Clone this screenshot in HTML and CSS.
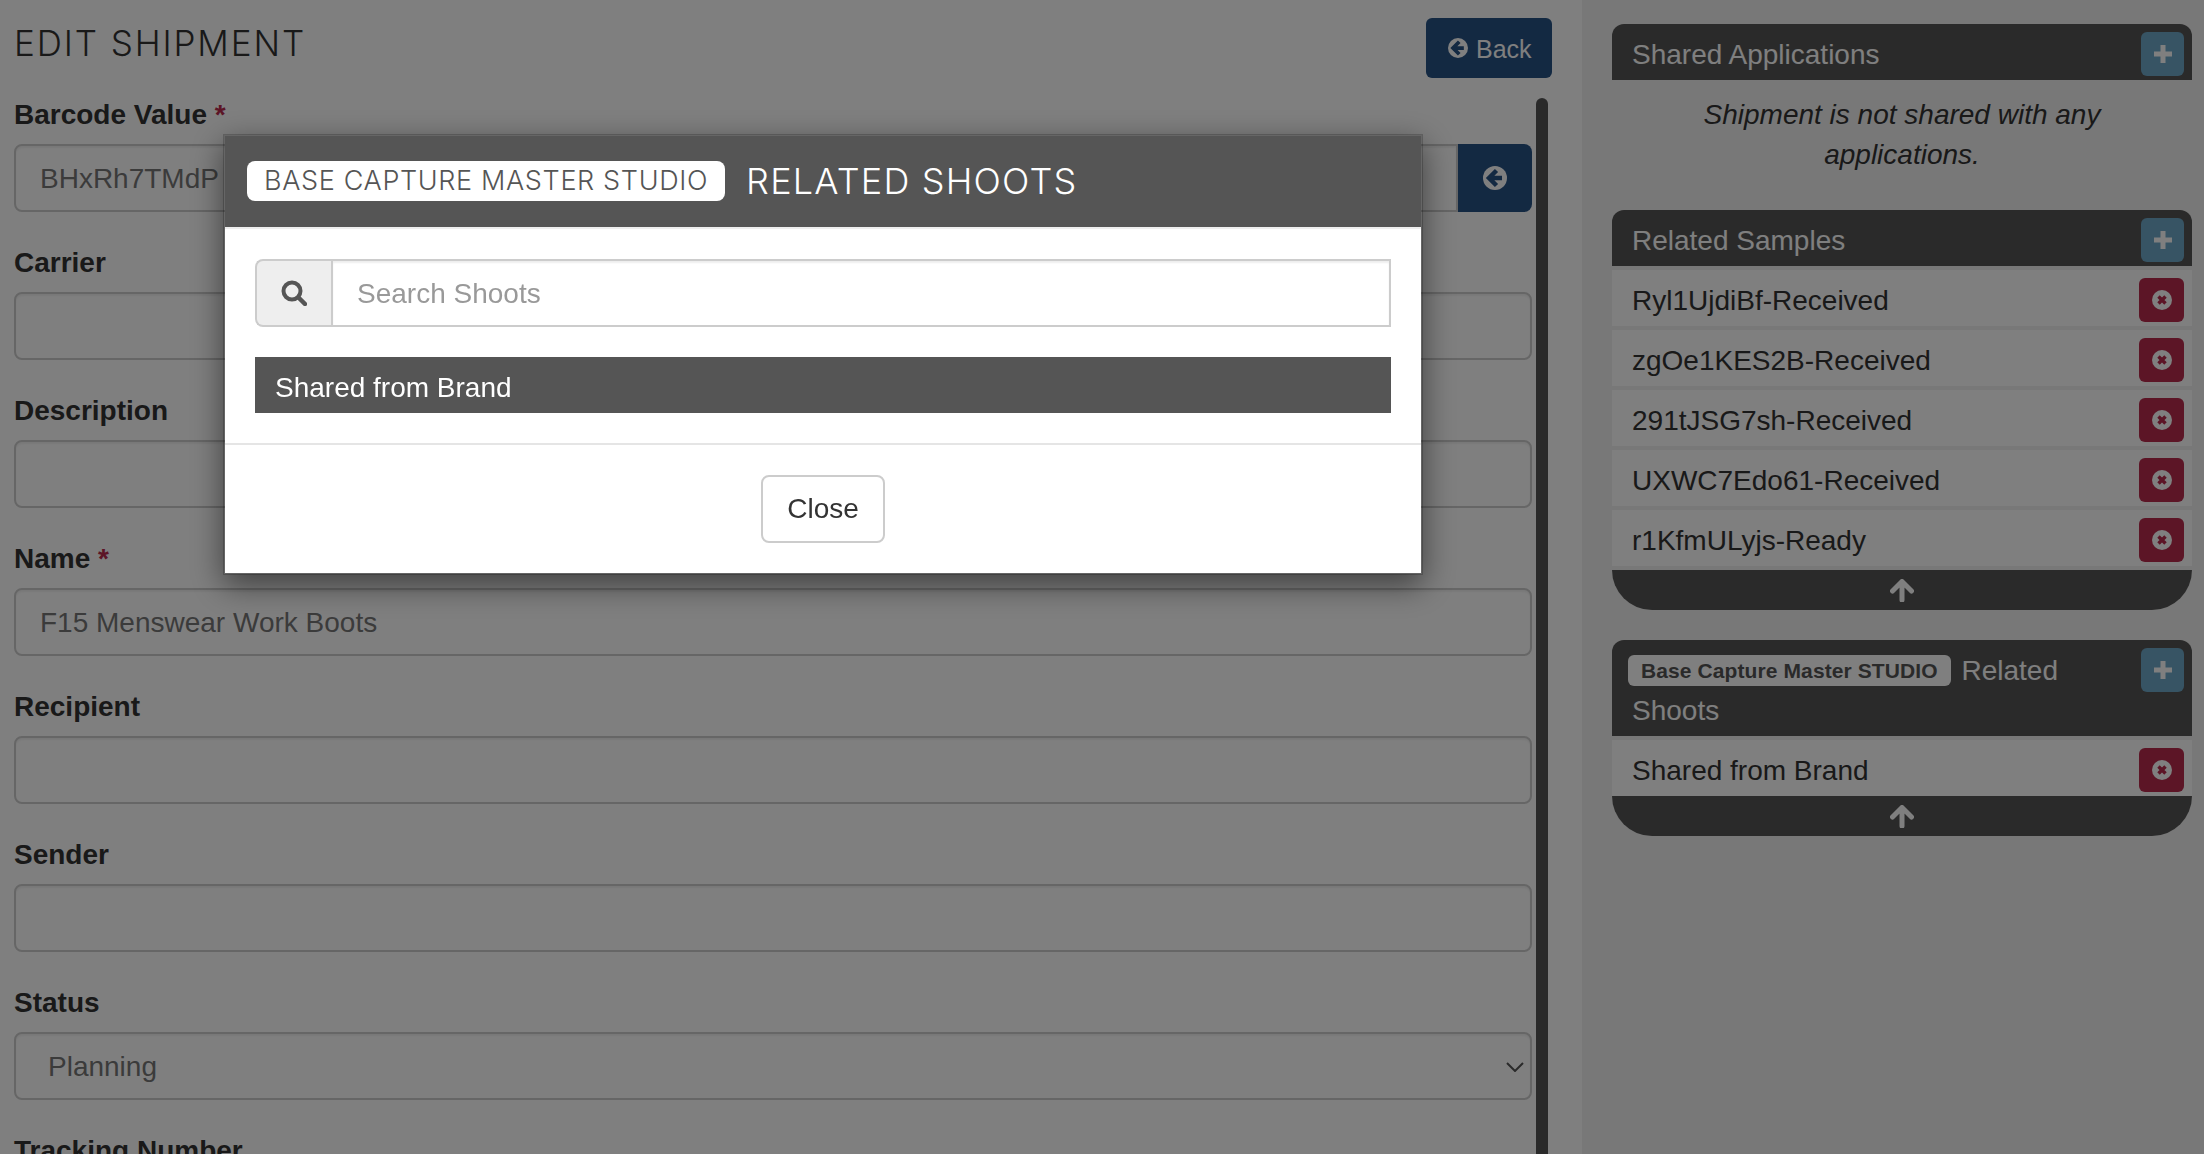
FILE: index.html
```html
<!DOCTYPE html>
<html lang="en">
<head>
<meta charset="utf-8">
<title>Edit Shipment</title>
<link rel="stylesheet" href="styles.css">
</head>
<body>
<div class="page">
  <main class="main">
    <header class="main-head">
      <h1 class="page-title">EDIT SHIPMENT</h1>
      <button class="btn-back" type="button">
        <svg class="icon-back" viewBox="0 0 24 24"><circle cx="12" cy="12" r="12" fill="currentColor"/><path d="M13.500 4.500 6 12l7.500 7.500M7 12H19" fill="none" stroke="#265285" stroke-width="4.500"/></svg>
        <span class="btn-back-text">Back</span>
      </button>
    </header>
    <div class="main-body">
      <form class="form">
        <div class="field">
          <label class="label">Barcode Value <span class="req">*</span></label>
          <div class="input-group">
            <input class="input input--joined" type="text" value="BHxRh7TMdP">
            <span class="addon-btn"><svg class="icon-addon" viewBox="0 0 24 24"><circle cx="12" cy="12" r="12" fill="currentColor"/><path d="M13.500 4.500 6 12l7.500 7.500M7 12H19" fill="none" stroke="#265285" stroke-width="4.500"/></svg></span>
          </div>
        </div>
        <div class="field"><label class="label">Carrier</label><input class="input" type="text"></div>
        <div class="field"><label class="label">Description</label><input class="input" type="text"></div>
        <div class="field"><label class="label">Name <span class="req">*</span></label><input class="input" type="text" value="F15 Menswear Work Boots"></div>
        <div class="field"><label class="label">Recipient</label><input class="input" type="text"></div>
        <div class="field"><label class="label">Sender</label><input class="input" type="text"></div>
        <div class="field">
          <label class="label">Status</label>
          <div class="select-wrap">
            <select class="input select"><option>Planning</option></select>
            <svg class="icon-caret" viewBox="0 0 18 10"><path d="M1 1l8 8 8-8" fill="none" stroke="#555" stroke-width="2"/></svg>
          </div>
        </div>
        <div class="field"><label class="label">Tracking Number</label><input class="input" type="text"></div>
      </form>
      <div class="scrollbar"></div>
    </div>
  </main>

  <aside class="side">
    <section class="panel">
      <div class="panel-head">
        <div class="panel-title">Shared Applications</div>
        <button class="btn-add" type="button"><svg class="icon-plus" viewBox="0 0 18 18"><path d="M9 0v18M0 9h18" stroke="currentColor" stroke-width="5"/></svg></button>
      </div>
      <p class="panel-empty">Shipment is not shared with any applications.</p>
    </section>

    <section class="panel">
      <div class="panel-head">
        <div class="panel-title">Related Samples</div>
        <button class="btn-add" type="button"><svg class="icon-plus" viewBox="0 0 18 18"><path d="M9 0v18M0 9h18" stroke="currentColor" stroke-width="5"/></svg></button>
      </div>
      <div class="row"><span class="row-text">Ryl1UjdiBf-Received</span><button class="btn-del" type="button"><svg class="icon-x" viewBox="0 0 20 20"><circle cx="10" cy="10" r="10" fill="currentColor"/><path d="M6.500 6.500l7 7M13.500 6.500l-7 7" stroke="#b82a4c" stroke-width="3.500"/></svg></button></div>
      <div class="row"><span class="row-text">zgOe1KES2B-Received</span><button class="btn-del" type="button"><svg class="icon-x" viewBox="0 0 20 20"><circle cx="10" cy="10" r="10" fill="currentColor"/><path d="M6.500 6.500l7 7M13.500 6.500l-7 7" stroke="#b82a4c" stroke-width="3.500"/></svg></button></div>
      <div class="row"><span class="row-text">291tJSG7sh-Received</span><button class="btn-del" type="button"><svg class="icon-x" viewBox="0 0 20 20"><circle cx="10" cy="10" r="10" fill="currentColor"/><path d="M6.500 6.500l7 7M13.500 6.500l-7 7" stroke="#b82a4c" stroke-width="3.500"/></svg></button></div>
      <div class="row"><span class="row-text">UXWC7Edo61-Received</span><button class="btn-del" type="button"><svg class="icon-x" viewBox="0 0 20 20"><circle cx="10" cy="10" r="10" fill="currentColor"/><path d="M6.500 6.500l7 7M13.500 6.500l-7 7" stroke="#b82a4c" stroke-width="3.500"/></svg></button></div>
      <div class="row"><span class="row-text">r1KfmULyjs-Ready</span><button class="btn-del" type="button"><svg class="icon-x" viewBox="0 0 20 20"><circle cx="10" cy="10" r="10" fill="currentColor"/><path d="M6.500 6.500l7 7M13.500 6.500l-7 7" stroke="#b82a4c" stroke-width="3.500"/></svg></button></div>
      <div class="panel-foot panel-foot--gap"><svg class="icon-up" viewBox="0 0 24 23"><path d="M2.500 12 12 2.500 21.500 12M12 4v17" fill="none" stroke="currentColor" stroke-width="5" stroke-linecap="round" stroke-linejoin="round"/></svg></div>
    </section>

    <section class="panel">
      <div class="panel-head">
        <div class="panel-title"><span class="tag">Base Capture Master STUDIO</span> Related Shoots</div>
        <button class="btn-add" type="button"><svg class="icon-plus" viewBox="0 0 18 18"><path d="M9 0v18M0 9h18" stroke="currentColor" stroke-width="5"/></svg></button>
      </div>
      <div class="row"><span class="row-text">Shared from Brand</span><button class="btn-del" type="button"><svg class="icon-x" viewBox="0 0 20 20"><circle cx="10" cy="10" r="10" fill="currentColor"/><path d="M6.500 6.500l7 7M13.500 6.500l-7 7" stroke="#b82a4c" stroke-width="3.500"/></svg></button></div>
      <div class="panel-foot"><svg class="icon-up" viewBox="0 0 24 23"><path d="M2.500 12 12 2.500 21.500 12M12 4v17" fill="none" stroke="currentColor" stroke-width="5" stroke-linecap="round" stroke-linejoin="round"/></svg></div>
    </section>
  </aside>
</div>

<div class="backdrop"></div>

<div class="modal" role="dialog">
  <div class="modal-head">
    <span class="modal-tag">BASE CAPTURE MASTER STUDIO</span>
    <h2 class="modal-title">RELATED SHOOTS</h2>
  </div>
  <div class="modal-body">
    <div class="search">
      <span class="search-addon"><svg class="icon-search" viewBox="0 0 26 26"><circle cx="11" cy="11" r="8.500" fill="none" stroke="currentColor" stroke-width="4"/><path d="M17.500 17.500 24 24" stroke="currentColor" stroke-width="4.500" stroke-linecap="round"/></svg></span>
      <input class="search-input" type="text" placeholder="Search Shoots">
    </div>
    <div class="result">Shared from Brand</div>
  </div>
  <div class="modal-foot">
    <button class="btn-close" type="button">Close</button>
  </div>
</div>
</body>
</html>
```

FILE: styles.css
```css
* { box-sizing: border-box; }

html, body {
  margin: 0;
  height: 100%;
  overflow: hidden;
}

body {
  font-family: "Liberation Sans", Arial, sans-serif;
  font-size: 28px;
  line-height: 40px;
  color: #333;
  background: #fff;
}

.page {
  display: grid;
  grid-template-columns: 1582px 622px;
  height: 1154px;
  overflow: hidden;
}

/* Main column */
.main {
  padding-left: 14px;
  overflow: hidden;
}

.main-head {
  display: flex;
  justify-content: space-between;
  align-items: flex-start;
  height: 94px;
  padding: 18px 30px 0 0;
}

.page-title {
  margin: 0;
  font-family: Inter, "Liberation Sans", sans-serif;
  font-size: 35px;
  font-weight: 350;
  letter-spacing: 1.88px;
  line-height: 50px;
  color: #333;
}

.btn-back {
  display: flex;
  align-items: center;
  gap: 8px;
  width: 126px;
  height: 60px;
  padding: 0 0 0 22px;
  border: 0;
  border-radius: 6px;
  background: #265285;
  color: #fff;
  font: 25px/40px "Liberation Sans", Arial, sans-serif;
}

.btn-back-text { padding-top: 2px; }

.icon-back { width: 20px; height: 20px; }

.main-body {
  display: flex;
  align-items: flex-start;
  gap: 4px;
}

.form { width: 1518px; flex: none; }

.field { margin-bottom: 30px; }

.label {
  display: block;
  height: 40px;
  margin-bottom: 10px;
  padding-top: 1px;
  font-weight: 700;
}

.req { color: #b82a4c; }

.input {
  display: block;
  width: 100%;
  height: 68px;
  padding: 2px 24px 0;
  border: 2px solid #ccc;
  border-radius: 8px;
  background: #fff;
  color: #777;
  font: 28px/40px "Liberation Sans", Arial, sans-serif;
  box-shadow: inset 0 2px 2px rgba(0, 0, 0, .06);
}

.input-group { display: flex; }

.input--joined {
  flex: 1;
  border-radius: 8px 0 0 8px;
}

.addon-btn {
  display: flex;
  align-items: center;
  justify-content: center;
  flex: none;
  width: 74px;
  height: 68px;
  border-radius: 0 8px 8px 0;
  background: #265285;
  color: #fff;
}

.icon-addon { width: 24px; height: 24px; }

.select-wrap { position: relative; }

.select {
  appearance: none;
  padding-left: 32px;
}

.icon-caret {
  position: absolute;
  right: 8px;
  top: 30px;
  width: 18px;
  height: 10px;
}

.scrollbar {
  flex: none;
  width: 12px;
  height: 1060px;
  margin-top: 4px;
  border-radius: 6px 6px 0 0;
  background: #555;
}

/* Side column */
.side {
  padding: 24px 12px 0 30px;
  background: #f0f0f0;
}

.panel { margin-bottom: 30px; }

.panel-head {
  display: flex;
  align-items: flex-start;
  justify-content: space-between;
  padding: 8px 8px 0 20px;
  border-radius: 12px 12px 0 0;
  background: #555;
  color: #fff;
}

.panel-title {
  flex: 1;
  padding: 3px 0 5px;
}

.tag {
  display: inline-block;
  height: 31px;
  margin: 0 3px 0 -4px;
  padding: 0 13px;
  border-radius: 6px;
  background: #fff;
  color: #555;
  font-size: 21px;
  font-weight: 700;
  letter-spacing: .1px;
  line-height: 31px;
  vertical-align: 2px;
}

.btn-add {
  display: flex;
  align-items: center;
  justify-content: center;
  flex: none;
  width: 43px;
  height: 44px;
  padding: 0;
  border: 0;
  border-radius: 6px;
  background: #6ea8c8;
  color: #fff;
}

.icon-plus { width: 18px; height: 18px; }

.panel-empty {
  margin: 0;
  padding: 15px 60px 5px;
  font-style: italic;
  text-align: center;
}

.row {
  display: flex;
  align-items: center;
  justify-content: space-between;
  height: 56px;
  margin-top: 4px;
  padding: 0 8px 0 20px;
  background: #fefefe;
}

.row-text { padding-top: 5px; }

.btn-del {
  display: flex;
  align-items: center;
  justify-content: center;
  flex: none;
  width: 45px;
  height: 44px;
  margin-top: 4px;
  padding: 0;
  border: 0;
  border-radius: 6px;
  background: #b82a4c;
  color: #fff;
}

.icon-x { width: 20px; height: 20px; }

.panel-foot {
  display: flex;
  align-items: center;
  justify-content: center;
  height: 40px;
  border-radius: 0 0 40px 40px;
  background: #555;
  color: #fff;
}

.panel-foot--gap { margin-top: 4px; }

.icon-up { width: 24px; height: 23px; }

/* Backdrop and modal */
.backdrop {
  position: fixed;
  inset: 0;
  background: rgba(0, 0, 0, .5);
}

.modal {
  position: fixed;
  left: 223px;
  top: 134px;
  width: 1200px;
  height: 441px;
  border: 2px solid rgba(0, 0, 0, .2);
  background: #fff;
  background-clip: padding-box;
  box-shadow: 0 10px 30px rgba(0, 0, 0, .5);
}

.modal-head {
  display: flex;
  align-items: center;
  gap: 21px;
  height: 93px;
  padding: 0 22px 2px;
  border-bottom: 2px solid #eee;
  background: #555;
  background-clip: padding-box;
  color: #fff;
}

.modal-tag {
  height: 40px;
  padding: 0 17px;
  border-radius: 8px;
  background: #fff;
  color: #555;
  font-family: Inter, "Liberation Sans", sans-serif;
  font-size: 27px;
  font-weight: 350;
  letter-spacing: .65px;
  line-height: 40px;
  white-space: nowrap;
}

.modal-title {
  margin: 0;
  font-family: Inter, "Liberation Sans", sans-serif;
  font-size: 36px;
  font-weight: 350;
  letter-spacing: 1.2px;
  line-height: 50px;
  white-space: nowrap;
}

.modal-body {
  padding: 30px;
  border-bottom: 2px solid #e5e5e5;
}

.search {
  display: flex;
  height: 68px;
  margin-bottom: 30px;
}

.search-addon {
  display: flex;
  align-items: center;
  justify-content: center;
  flex: none;
  width: 76px;
  border: 2px solid #ccc;
  border-right: 0;
  border-radius: 8px 0 0 8px;
  background: #eee;
  color: #555;
}

.icon-search { width: 26px; height: 26px; }

.search-input {
  flex: 1;
  min-width: 0;
  padding: 2px 24px 0;
  border: 2px solid #ccc;
  border-radius: 0;
  color: #555;
  font: 28px/40px "Liberation Sans", Arial, sans-serif;
  box-shadow: inset 0 2px 2px rgba(0, 0, 0, .07);
}

.search-input::placeholder { color: #999; opacity: 1; }

.result {
  height: 56px;
  padding: 0 20px;
  background: #555;
  color: #fff;
  line-height: 61px;
}

.modal-foot {
  display: flex;
  justify-content: center;
  padding: 30px;
}

.btn-close {
  width: 124px;
  height: 68px;
  padding: 0;
  border: 2px solid #ccc;
  border-radius: 8px;
  background: #fff;
  color: #333;
  font: 28px/40px "Liberation Sans", Arial, sans-serif;
}
```
